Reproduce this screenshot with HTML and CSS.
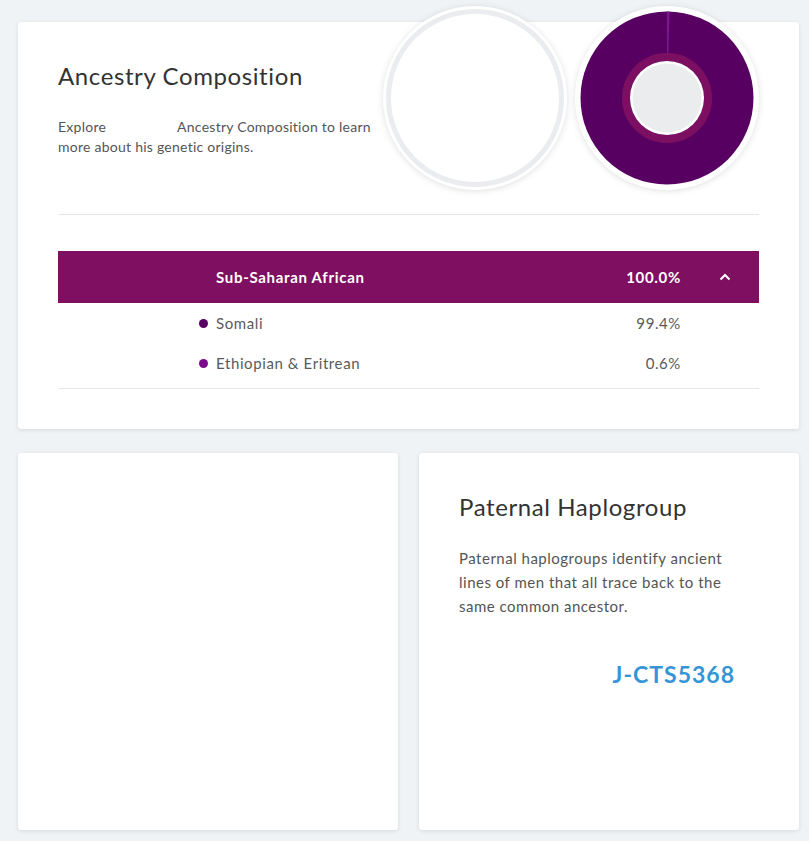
FILE: index.html
```html
<!DOCTYPE html>
<html lang="en">
<head>
    <meta charset="UTF-8">
    <meta name="viewport" content="width=device-width, initial-scale=1.0">
    <title>Ancestry Overview</title>
    <link rel="stylesheet" href="styles.css">
</head>
<body>
    <div class="page">
        <div class="card ancestry">
            <div class="ancestry-head">
                <h2 class="card-title">Ancestry Composition</h2>
                <p class="intro">Explore<span class="name-gap"></span>Ancestry Composition to learn<br>more about his genetic origins.</p>

                <div class="charts">
                    <svg class="chart" width="184" height="184" viewBox="0 0 184 184">
                        <circle cx="92" cy="92" r="92" fill="#fff"/>
                        <circle cx="92" cy="92" r="86.5" fill="#fff" stroke="#eaecef" stroke-width="5"/>
                    </svg>
                    <svg class="chart" width="184" height="184" viewBox="0 0 184 184">
                        <circle cx="92" cy="92" r="92" fill="#fff"/>
                        <circle cx="92" cy="92" r="86.5" fill="#570062"/>
                        <path d="M92 5.5 A86.5 86.5 0 0 1 94.6 5.54 L93.3 47 A45 45 0 0 0 92 47 Z" fill="#7e178f"/>
                        <circle cx="92" cy="92" r="41" fill="none" stroke="#7d0f62" stroke-width="8"/>
                        <circle cx="92" cy="92" r="37" fill="#fff"/>
                        <circle cx="92" cy="92" r="34.5" fill="#ebecee"/>
                    </svg>
                </div>
            </div>

            <div class="breakdown">
                <div class="region-bar">
                    <span class="region-name">Sub-Saharan African</span>
                    <span class="region-pct">100.0%</span>
                    <span class="caret">
                        <svg width="12" height="8" viewBox="0 0 12 8"><polyline points="1.5,6.5 6,2 10.5,6.5" fill="none" stroke="#fff" stroke-width="2"/></svg>
                    </span>
                </div>
                <div class="sub-row">
                    <span class="dot dot-somali"></span>
                    <span class="sub-name">Somali</span>
                    <span class="sub-pct">99.4%</span>
                </div>
                <div class="sub-row">
                    <span class="dot dot-ethiopian"></span>
                    <span class="sub-name">Ethiopian &amp; Eritrean</span>
                    <span class="sub-pct">0.6%</span>
                </div>
            </div>
        </div>

        <div class="card-grid">
            <div class="card empty"></div>
            <div class="card haplo">
                <h2 class="card-title">Paternal Haplogroup</h2>
                <p class="haplo-text">Paternal haplogroups identify ancient lines of men that all trace back to the same common ancestor.</p>
                <div class="haplo-code">J-CTS5368</div>
            </div>
        </div>
    </div>
</body>
</html>
```

FILE: styles.css
```css
body { margin: 0; background: #eff3f6; font-family: Lato, "Noto Sans", Arial, sans-serif; color: #333; }
.page { padding: 22px 10px 12px 18px; }
.card { background: #fff; border-radius: 3px; box-shadow: 0 1px 4px rgba(0,0,0,0.1); box-sizing: border-box; }
.card-title { font-size: 24px; line-height: 30px; font-weight: 400; letter-spacing: 0.6px; color: #333; margin: 0; }

.ancestry { padding: 39px 40px 40px; }
.ancestry-head { position: relative; height: 153px; border-bottom: 1px solid #e6e6e6; }
.intro { width: 320px; margin: 26px 0 0; font-size: 14px; line-height: 20px; letter-spacing: 0.25px; color: #555; }
.name-gap { display: inline-block; width: 71px; }
.charts { position: absolute; top: -55px; right: 0; display: flex; gap: 8px; }
.chart { display: block; filter: drop-shadow(0 1px 3px rgba(0,0,0,0.12)); }

.breakdown { margin-top: 36px; border-bottom: 1px solid #e6e6e6; padding-bottom: 5px; }
.region-bar { display: flex; align-items: center; height: 52px; background: #7f0f61; color: #fff; font-weight: 700; font-size: 15px; letter-spacing: 0.7px; padding-left: 158px; }
.region-name { flex: 1; }
.caret { width: 78px; padding-left: 38px; box-sizing: border-box; display: flex; align-items: center; }
.caret svg { display: block; }
.sub-row { display: flex; align-items: center; height: 40px; padding-left: 141px; padding-right: 78px; font-size: 15px; letter-spacing: 0.6px; color: #5a5a5a; }
.dot { width: 9px; height: 9px; border-radius: 50%; margin-right: 8px; }
.dot-somali { background: #570062; }
.dot-ethiopian { background: #7b0a8c; }
.sub-name { flex: 1; }

.card-grid { display: grid; grid-template-columns: 1fr 1fr; gap: 21px; margin-top: 24px; }
.card-grid .card { height: 377px; }
.haplo { padding: 39px 40px; }
.haplo-text { max-width: 280px; margin: 24px 0 0; font-size: 15px; line-height: 24px; letter-spacing: 0.5px; color: #555; }
.haplo-code { margin: 42px 24px 0 0; text-align: right; font-size: 23px; line-height: 28px; font-weight: 700; letter-spacing: 1px; color: #3595d6; }
```
